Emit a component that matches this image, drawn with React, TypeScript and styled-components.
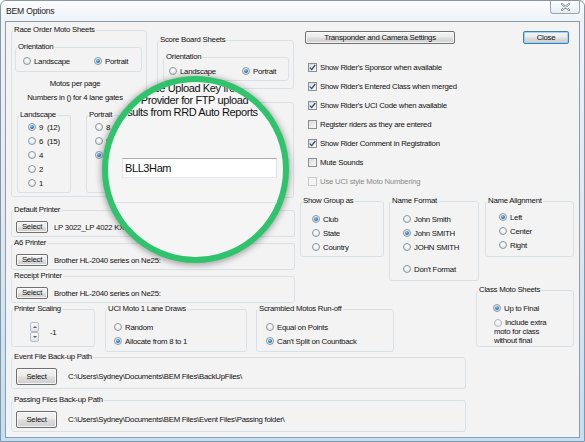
import React from "react";
import styled, { createGlobalStyle } from "styled-components";

const GlobalStyle = createGlobalStyle`
  html, body { margin: 0; padding: 0; background: #ffffff; overflow: hidden; }
  body {
    font-family: "Liberation Sans", Arial, sans-serif;
    font-size: 7.8px;
    letter-spacing: -0.25px;
    color: #111;
  }
`;

const Window = styled.div`
  position: relative;
  width: 585px;
  height: 442px;
  box-sizing: border-box;
  border: 1px solid #8896a4;
  border-radius: 6px 6px 0 0;
  background: linear-gradient(180deg, #fbfcfe 0px, #eef3f8 20px, #dce8f2 55%, #bfe0f6 100%);
  display: flex;
  flex-direction: column;
  overflow: hidden;
`;

const TitleBar = styled.div`
  display: flex;
  align-items: center;
  height: 20px;
  padding-left: 5px;
`;

const Title = styled.span`
  font-size: 8.6px;
  letter-spacing: -0.2px;
  line-height: 12px;
  color: #1a1a1a;
`;

const CloseBox = styled.div`
  margin-left: auto;
  margin-right: 4px;
  align-self: flex-start;
  width: 30px;
  height: 13px;
  box-sizing: border-box;
  border: 1px solid #9aa6b2;
  border-top: 0;
  border-radius: 0 0 3px 3px;
  background: linear-gradient(#fdfeff, #e6edf4);
  display: flex;
  align-items: center;
  justify-content: center;
`;

const Client = styled.div`
  flex: 1;
  margin: 0 4px 3px;
  border: 1px solid #8f9ba7;
  background: #f3f3f3;
  padding: 3px 0 0 5px;
  box-sizing: border-box;
  display: grid;
  grid-template-columns: 284px 94px 67px 103px;
  grid-template-rows: 260px 19px 48px 43px auto;
  column-gap: 5px;
`;

/* group boxes */
const Group = styled.fieldset<{ $w?: number; $h: number }>`
  margin: 0;
  padding: 0;
  min-width: 0;
  box-sizing: border-box;
  border: 1px solid #d9e1e7;
  border-radius: 3px;
  width: ${p => (p.$w ? `${p.$w}px` : "auto")};
  height: ${p => p.$h}px;
  flex: none;
`;

const Caption = styled.legend`
  padding: 0 1px;
  margin-left: 1px;
  line-height: 10px;
  font-size: 7.8px;
  color: #111;
`;

/* radio + checkbox */
const Dot = styled.span<{ $on?: boolean; $dim?: boolean }>`
  position: relative;
  flex: none;
  display: inline-block;
  width: 8px;
  height: 8px;
  box-sizing: border-box;
  border-radius: 50%;
  border: 1px solid ${p => (p.$dim ? "#b4bbc0" : "#8e969c")};
  background: radial-gradient(circle at 50% 35%, #ffffff 0%, #eceeef 55%, #cfd3d6 100%);
  margin-right: 3px;
  vertical-align: middle;
  &::after {
    content: "";
    display: ${p => (p.$on ? "block" : "none")};
    position: absolute;
    left: 1px;
    top: 1px;
    width: 4px;
    height: 4px;
    border-radius: 50%;
    background: radial-gradient(circle at 40% 35%, #9ad6fa 0%, #2a88cf 45%, #0d4a86 100%);
  }
`;

const Option = styled.div<{ $w?: number; $mt?: number }>`
  display: flex;
  align-items: center;
  flex: none;
  height: 14px;
  margin-top: ${p => p.$mt ?? 0}px;
  width: ${p => (p.$w ? `${p.$w}px` : "auto")};
  white-space: pre;
`;

const Radio: React.FC<{ on?: boolean; w?: number; mt?: number; children: React.ReactNode }> = ({ on, w, mt, children }) => (
  <Option $w={w} $mt={mt}>
    <Dot $on={on} />
    <span>{children}</span>
  </Option>
);

const Box = styled.span<{ $off?: boolean }>`
  flex: none;
  width: 9px;
  height: 9px;
  box-sizing: border-box;
  border: 1px solid ${p => (p.$off ? "#c6cacd" : "#8e8f8f")};
  background: ${p => (p.$off ? "#f4f4f4" : "linear-gradient(135deg, #d9d9d9, #fbfbfb)")};
  display: flex;
  align-items: center;
  justify-content: center;
  margin-right: 3px;
`;

const CheckRow = styled.div<{ $off?: boolean }>`
  display: flex;
  align-items: center;
  height: 19px;
  color: ${p => (p.$off ? "#8d8d8d" : "#111")};
`;

const Check: React.FC<{ on?: boolean; off?: boolean; children: React.ReactNode }> = ({ on, off, children }) => (
  <CheckRow $off={off}>
    <Box $off={off}>
      {on && (
        <svg width="7" height="7" viewBox="0 0 7 7">
          <path d="M0.8 3.6 L2.7 5.6 L6.3 1" stroke="#2a4a80" strokeWidth="1.3" fill="none" />
        </svg>
      )}
    </Box>
    {children}
  </CheckRow>
);

const WinButton = styled.div<{ $w: number; $h: number; $default?: boolean }>`
  flex: none;
  width: ${p => p.$w}px;
  height: ${p => p.$h}px;
  box-sizing: border-box;
  border: 1px solid ${p => (p.$default ? "#3c7fb1" : "#707070")};
  border-radius: 2px;
  background: linear-gradient(180deg, #f3f3f3 0%, #ebebeb 48%, #dddddd 52%, #cfcfcf 100%);
  box-shadow: inset 0 0 0 1px ${p => (p.$default ? "rgba(150,210,245,.9)" : "rgba(255,255,255,.75)")};
  display: flex;
  align-items: center;
  justify-content: center;
  line-height: 1;
  color: #111;
`;

const CloseButton = styled(WinButton)`
  margin-left: auto;
`;

/* layout parts */
const LeftBlock = styled.div`
  grid-column: 1;
  grid-row: 1 / span 2;
  display: flex;
  flex-direction: column;
`;

const TopRow = styled.div`
  display: flex;
  align-items: flex-start;
  height: 173px;
`;

const SubGroup = styled(Group)<{ $mt?: number; $ml?: number; $mr?: number }>`
  margin: ${p => p.$mt ?? 0}px ${p => p.$mr ?? 0}px 0 ${p => p.$ml ?? 0}px;
`;

const OptionLine = styled.div<{ $pl: number }>`
  display: flex;
  height: 18px;
  align-items: center;
  padding-left: ${p => p.$pl}px;
`;

const Note = styled.div<{ $mt: number }>`
  margin-top: ${p => p.$mt}px;
  line-height: 10px;
  text-align: center;
  padding-right: 8px;
`;

const PairRow = styled.div`
  display: flex;
  margin-top: 7px;
`;

const OptionStack = styled.div<{ $pt?: number; $pl: number }>`
  display: flex;
  flex-direction: column;
  padding-top: ${p => p.$pt ?? 0}px;
  padding-left: ${p => p.$pl}px;
`;

const ScoreCol = styled.div`
  display: flex;
  flex-direction: column;
  margin: 10px 0 0 10px;
`;

const PrinterList = styled.div`
  display: flex;
  flex-direction: column;
  gap: 1px;
  margin-top: 7px;
`;

const PickRow = styled.div<{ $gap: number }>`
  display: flex;
  align-items: center;
  margin-top: 6px;
  padding-left: 4px;
  gap: ${p => p.$gap}px;
  white-space: nowrap;
`;

const RightPanel = styled.div`
  grid-column: 2 / span 3;
  grid-row: 1;
  display: flex;
  flex-direction: column;
  padding-top: 6px;
`;

const ButtonBar = styled.div`
  display: flex;
  padding: 0 5px;
`;

const CheckList = styled.div`
  display: flex;
  flex-direction: column;
  margin-top: 14px;
  padding-left: 8px;
`;

const GroupsRow = styled.div`
  display: flex;
  align-items: flex-start;
  margin-top: 5px;
`;

const ClassGroup = styled(Group)`
  grid-column: 4;
  grid-row: 2 / span 2;
  justify-self: end;
  align-self: start;
`;

const Wrapped = styled.div`
  margin-top: 3px;
  padding-left: 17px;
  line-height: 9px;
`;

const BottomRow = styled.div`
  grid-column: 1 / span 2;
  grid-row: 3;
  display: flex;
  align-items: flex-start;
`;

const ScaleRow = styled.div`
  display: flex;
  align-items: center;
  margin-top: 8px;
  padding-left: 18px;
  gap: 11px;
`;

const Spin = styled.div`
  display: flex;
  flex-direction: column;
  width: 9px;
`;

const SpinHalf = styled.div<{ $down?: boolean }>`
  height: 10px;
  box-sizing: border-box;
  border: 1px solid #b5bcc4;
  border-radius: 2px;
  background: linear-gradient(#f8fafc, #dfe5ea);
  display: flex;
  align-items: center;
  justify-content: center;
  &::after {
    content: "";
    border-left: 2px solid transparent;
    border-right: 2px solid transparent;
    ${p => (p.$down ? "border-top: 2px solid #4d5f74;" : "border-bottom: 2px solid #4d5f74;")}
  }
`;

const PathGroup = styled(Group)<{ $row: number }>`
  grid-column: 1 / span 3;
  grid-row: ${p => p.$row};
  align-self: start;
`;

/* magnifier */
const Lens = styled.div`
  position: absolute;
  left: 101px;
  top: 75px;
  width: 187px;
  height: 187px;
  box-sizing: border-box;
  border-radius: 50%;
  border: 6px solid #2fc46b;
  background: #f5f5f5;
  overflow: hidden;
  box-shadow: 0 1px 6px 1px rgba(0, 0, 0, 0.35);
`;

const LensBody = styled.div`
  display: flex;
  flex-direction: column;
  padding-left: 6px;
  font-size: 11px;
  letter-spacing: -0.4px;
  color: #111;
`;

const LensLine = styled.div`
  line-height: 12px;
  white-space: nowrap;
`;

const LensInput = styled.div`
  margin: 40px 0 0 8px;
  width: 155px;
  height: 20px;
  box-sizing: border-box;
  border: 1px solid;
  border-color: #abadb3 #dbdfe6 #e3e9ef #e2e3ea;
  background: #fff;
  padding-left: 2px;
  display: flex;
  align-items: center;
`;

const LensRule = styled.div`
  margin-top: 24px;
  border-top: 1px solid #dce3e8;
`;

const printers = [
  { title: "Default Printer", value: "LP 3022_LP 4022 KX on Ne03:" },
  { title: "A6 Printer", value: "Brother HL-2040 series on Ne25:" },
  { title: "Receipt Printer", value: "Brother HL-2040 series on Ne25:" },
];

const checks = [
  { text: "Show Rider's Sponsor when available", on: true },
  { text: "Show Rider's Entered Class when merged", on: true },
  { text: "Show Rider's UCI Code when available", on: true },
  { text: "Register riders as they are entered" },
  { text: "Show Rider Comment in Registration", on: true },
  { text: "Mute Sounds" },
  { text: "Use UCI style Moto Numbering", off: true },
];

export default function App() {
  return (
    <>
      <GlobalStyle />
      <Window>
        <TitleBar>
          <Title>BEM Options</Title>
          <CloseBox>
            <svg width="11" height="8" viewBox="0 0 11 8">
              <path d="M2 1 L9 7 M9 1 L2 7" stroke="#8a9096" strokeWidth="2.2" strokeLinecap="round" />
              <path d="M2 1 L9 7 M9 1 L2 7" stroke="#f4f6f8" strokeWidth="0.8" strokeLinecap="round" />
            </svg>
          </CloseBox>
        </TitleBar>

        <Client>
          <LeftBlock>
            <TopRow>
              <Group $w={136} $h={172}>
                <Caption>Race Order Moto Sheets</Caption>
                <SubGroup $h={30} $mt={7} $ml={3} $mr={4}>
                  <Caption>Orientation</Caption>
                  <OptionLine $pl={7}>
                    <Radio w={71}>Landscape</Radio>
                    <Radio on>Portrait</Radio>
                  </OptionLine>
                </SubGroup>
                <Note $mt={7}>Motos per page</Note>
                <Note $mt={4}>Numbers in () for 4 lane gates</Note>
                <PairRow>
                  <SubGroup $w={54} $h={83} $ml={5}>
                    <Caption>Landscape</Caption>
                    <OptionStack $pl={10}>
                      <Radio on>{"9  (12)"}</Radio>
                      <Radio>{"6  (15)"}</Radio>
                      <Radio>4</Radio>
                      <Radio>2</Radio>
                      <Radio>1</Radio>
                    </OptionStack>
                  </SubGroup>
                  <SubGroup $w={56} $h={83} $ml={15}>
                    <Caption>Portrait</Caption>
                    <OptionStack $pl={8}>
                      <Radio>8</Radio>
                      <Radio>5</Radio>
                      <Radio on>4</Radio>
                    </OptionStack>
                  </SubGroup>
                </PairRow>
              </Group>

              <ScoreCol>
                <Group $w={137} $h={54}>
                  <Caption>Score Board Sheets</Caption>
                  <SubGroup $h={29} $mt={7} $ml={5} $mr={4}>
                    <Caption>Orientation</Caption>
                    <OptionLine $pl={5}>
                      <Radio w={73}>Landscape</Radio>
                      <Radio on>Portrait</Radio>
                    </OptionLine>
                  </SubGroup>
                </Group>
                <SubGroup $w={137} $h={96} $mt={13} />
              </ScoreCol>
            </TopRow>

            <PrinterList>
              {printers.map(p => (
                <Group key={p.title} $h={32}>
                  <Caption>{p.title}</Caption>
                  <PickRow $gap={6}>
                    <WinButton $w={32} $h={12}>Select</WinButton>
                    <span>{p.value}</span>
                  </PickRow>
                </Group>
              ))}
            </PrinterList>
          </LeftBlock>

          <RightPanel>
            <ButtonBar>
              <WinButton $w={150} $h={13}>Transponder and Camera Settings</WinButton>
              <CloseButton $w={46} $h={13} $default>Close</CloseButton>
            </ButtonBar>
            <CheckList>
              {checks.map(c => (
                <Check key={c.text} on={c.on} off={c.off}>{c.text}</Check>
              ))}
            </CheckList>
            <GroupsRow>
              <Group $w={84} $h={61}>
                <Caption>Show Group as</Caption>
                <OptionStack $pt={6} $pl={11}>
                  <Radio on>Club</Radio>
                  <Radio>State</Radio>
                  <Radio>Country</Radio>
                </OptionStack>
              </Group>
              <SubGroup $w={90} $h={85} $ml={5}>
                <Caption>Name Format</Caption>
                <OptionStack $pt={6} $pl={13}>
                  <Radio>John Smith</Radio>
                  <Radio on>John SMITH</Radio>
                  <Radio>JOHN SMITH</Radio>
                  <Radio mt={8}>Don't Format</Radio>
                </OptionStack>
              </SubGroup>
              <SubGroup $w={89} $h={61} $ml={6}>
                <Caption>Name Alignment</Caption>
                <OptionStack $pt={4} $pl={13}>
                  <Radio on>Left</Radio>
                  <Radio>Center</Radio>
                  <Radio>Right</Radio>
                </OptionStack>
              </SubGroup>
            </GroupsRow>
          </RightPanel>

          <ClassGroup $w={98} $h={62}>
            <Caption>Class Moto Sheets</Caption>
            <OptionStack $pt={6} $pl={16}>
              <Radio on>Up to Final</Radio>
            </OptionStack>
            <Wrapped>
              <Dot $dim />Include extra
              <br />
              moto for class
              <br />
              without final
            </Wrapped>
          </ClassGroup>

          <BottomRow>
            <Group $w={84} $h={43}>
              <Caption>Printer Scaling</Caption>
              <ScaleRow>
                <Spin>
                  <SpinHalf />
                  <SpinHalf $down />
                </Spin>
                <span>-1</span>
              </ScaleRow>
            </Group>
            <SubGroup $w={142} $h={48} $ml={10}>
              <Caption>UCI Moto 1 Lane Draws</Caption>
              <OptionStack $pt={6} $pl={8}>
                <Radio>Random</Radio>
                <Radio on>Allocate from 8 to 1</Radio>
              </OptionStack>
            </SubGroup>
            <SubGroup $w={138} $h={48} $ml={9}>
              <Caption>Scrambled Motos Run-off</Caption>
              <OptionStack $pt={6} $pl={9}>
                <Radio>Equal on Points</Radio>
                <Radio on>Can't Split on Countback</Radio>
              </OptionStack>
            </SubGroup>
          </BottomRow>

          <PathGroup $row={4} $h={37}>
            <Caption>Event File Back-up Path</Caption>
            <PickRow $gap={11}>
              <WinButton $w={41} $h={17}>Select</WinButton>
              <span>C:\Users\Sydney\Documents\BEM Files\BackUpFiles\</span>
            </PickRow>
          </PathGroup>
          <PathGroup $row={5} $h={37}>
            <Caption>Passing Files Back-up Path</Caption>
            <PickRow $gap={11}>
              <WinButton $w={41} $h={17}>Select</WinButton>
              <span>C:\Users\Sydney\Documents\BEM Files\Event Files\Passing folder\</span>
            </PickRow>
          </PathGroup>
        </Client>

        <Lens>
          <LensBody>
            <LensLine>Enter Race Upload Key from</LensLine>
            <LensLine>Race Provider for FTP upload</LensLine>
            <LensLine>Results from RRD Auto Reports</LensLine>
            <LensInput>BLL3Ham</LensInput>
            <LensRule />
          </LensBody>
        </Lens>
      </Window>
    </>
  );
}
